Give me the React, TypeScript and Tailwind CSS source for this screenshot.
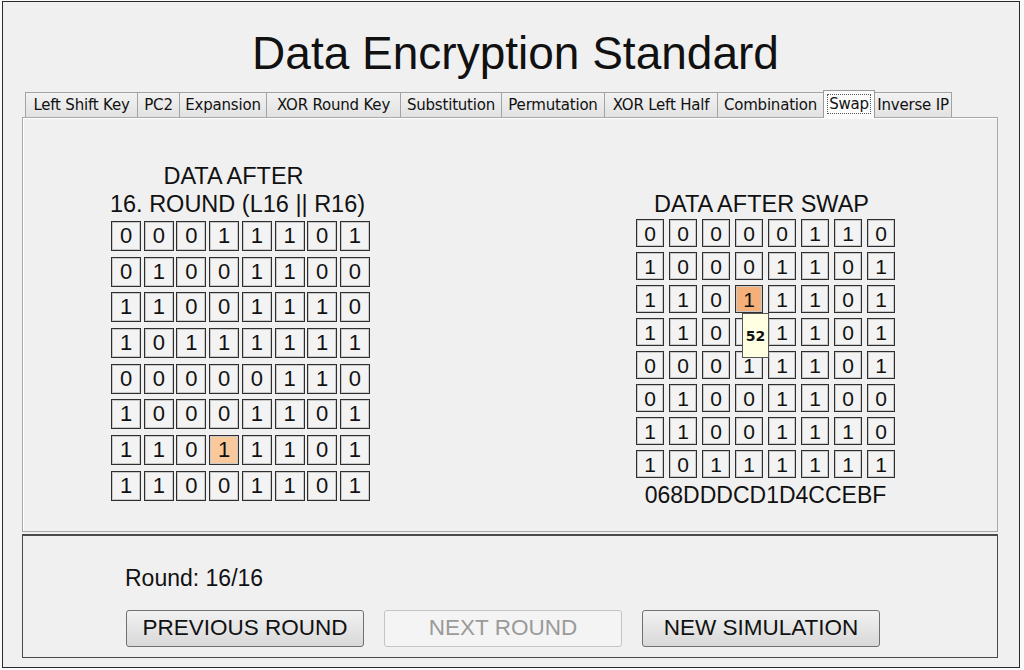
import React from "react";

const tabs = [
  { label: "Left Shift Key", w: 113 },
  { label: "PC2", w: 42 },
  { label: "Expansion", w: 87 },
  { label: "XOR Round Key", w: 134 },
  { label: "Substitution", w: 101 },
  { label: "Permutation", w: 103 },
  { label: "XOR Left Half", w: 113 },
  { label: "Combination", w: 106 },
  { label: "Swap", w: 52, active: true },
  { label: "Inverse IP", w: 77 },
];

const before = [
  "00011101",
  "01001100",
  "11001110",
  "10111111",
  "00000110",
  "10001101",
  "11011101",
  "11001101",
];

const after = [
  "00000110",
  "10001101",
  "11011101",
  "11011101",
  "00011101",
  "01001100",
  "11001110",
  "10111111",
];

const sans = "font-['Liberation_Sans',Arial,sans-serif]";
const tahoma = "font-['DejaVu_Sans',Tahoma,sans-serif]";

function Cell({ v, hl, big, tip }: { v: string; hl?: boolean; big?: boolean; tip?: string }) {
  return (
    <div
      className={`relative flex items-center justify-center border border-[#2e2e2e] shadow-[inset_0_0_0_1px_#c8c8c8] ${
        big ? "h-[30px] w-[30px] text-[22px]" : "h-[28px] w-[28px] text-[21px]"
      } ${hl ? (big ? "bg-[#f9c99c]" : "bg-[#f5b07a]") : "bg-[#f3f3f3]"} ${sans} leading-none text-[#111]`}
    >
      {v}
      {tip && (
        <div
          className={`absolute left-[6px] top-full z-10 mt-[1px] flex h-[45px] w-[27px] items-center justify-center border border-[#555] bg-[#ffffe1] text-[14px] font-bold text-[#111] ${tahoma}`}
        >
          {tip}
        </div>
      )}
    </div>
  );
}

export default function App() {
  return (
    <div className="h-[670px] w-[1024px] overflow-hidden bg-[#fafafa] pl-[2px] pt-[1px]">
      <div className="h-[667px] w-[1018px] border border-[#2a2a2a] bg-[#f0f0f0] pl-[19px]">
        {/* title */}
        <div className={`flex h-[90px] items-center justify-center pt-[12px] pr-[10px] text-[46px] text-[#111] ${sans}`}>
          Data Encryption Standard
        </div>

        {/* tab strip */}
        <div className="flex h-[25px] items-end pl-[3px]">
          {tabs.map((t, i) =>
            t.active ? (
              <div
                key={t.label}
                style={{ width: t.w }}
                className={`relative z-10 -mb-[1px] -ml-[1px] flex h-[28px] shrink-0 items-center justify-center border border-b-0 border-[#9a9a9a] bg-[#fcfcfc] pb-[2px] text-[15px] tracking-[-0.2px] text-[#111] ${tahoma}`}
              >
                <span className="border border-dotted border-[#555] px-[1px] leading-[18px]">{t.label}</span>
              </div>
            ) : (
              <div
                key={t.label}
                style={{ width: t.w }}
                className={`flex h-[25px] shrink-0 items-center justify-center border-t border-r border-[#a3a3a3] bg-gradient-to-b from-[#f2f2f2] to-[#e2e2e2] text-[15px] tracking-[-0.2px] text-[#111] ${
                  i === 0 ? "border-l" : ""
                } ${tahoma}`}
              >
                {t.label}
              </div>
            ),
          )}
        </div>

        {/* tab panel */}
        <div className="flex h-[415px] w-[976px] border border-[#a8a8a8] bg-[#f0f0f0] shadow-[inset_1px_1px_0_#ffffff]">
          <div className="flex w-[259px] shrink-0 flex-col items-center ml-[88px] pt-[44px]">
            <div className={`whitespace-nowrap text-center text-[23.5px] leading-[28px] text-[#111] ${sans}`}>
              <div className="pr-[14px]">DATA AFTER</div>
              <div className="pr-[6px]">16. ROUND (L16 || R16)</div>
            </div>
            <div className="mt-[3px] grid grid-cols-[repeat(8,30px)] gap-x-[2.7px] gap-y-[5.7px]">
              {before.map((row, r) =>
                row.split("").map((v, c) => <Cell key={`${r}-${c}`} v={v} big hl={r === 6 && c === 3} />),
              )}
            </div>
          </div>

          <div className="ml-[266px] flex w-[259px] shrink-0 flex-col items-center pt-[72px]">
            <div className={`whitespace-nowrap pr-[8px] text-[23.5px] leading-[28px] text-[#111] ${sans}`}>DATA AFTER SWAP</div>
            <div className="mt-[1px] grid grid-cols-[repeat(8,28px)] gap-[5px]">
              {after.map((row, r) =>
                row.split("").map((v, c) => (
                  <Cell
                    key={`${r}-${c}`}
                    v={v}
                    hl={r === 2 && c === 3}
                    tip={r === 2 && c === 3 ? "52" : undefined}
                  />
                )),
              )}
            </div>
            <div className={`mt-[3px] text-[23px] leading-[28px] text-[#111] ${sans}`}>068DDDCD1D4CCEBF</div>
          </div>
        </div>

        {/* controls */}
        <div className="mt-[2px] h-[124px] w-[976px] border border-t-2 border-[#4a4a4a] bg-[#f0f0f0] pl-[102px] pt-[28px]">
          <div className={`text-[23px] leading-[28px] text-[#111] ${sans}`}>Round: 16/16</div>
          <div className="mt-[18px] flex gap-[20px] pl-[1px]">
            <button
              className={`h-[37px] w-[238px] rounded-[3px] border border-[#707070] bg-gradient-to-b from-[#f2f2f2] to-[#d8d8d8] text-[22.5px] leading-none text-[#111] ${sans}`}
            >
              PREVIOUS ROUND
            </button>
            <button
              className={`h-[37px] w-[238px] rounded-[3px] border border-[#c4c4c4] bg-[#f4f4f4] text-[22.5px] leading-none text-[#9a9a9a] ${sans}`}
            >
              NEXT ROUND
            </button>
            <button
              className={`h-[37px] w-[238px] rounded-[3px] border border-[#707070] bg-gradient-to-b from-[#f2f2f2] to-[#d8d8d8] text-[22.5px] leading-none text-[#111] ${sans}`}
            >
              NEW SIMULATION
            </button>
          </div>
        </div>
      </div>
    </div>
  );
}
